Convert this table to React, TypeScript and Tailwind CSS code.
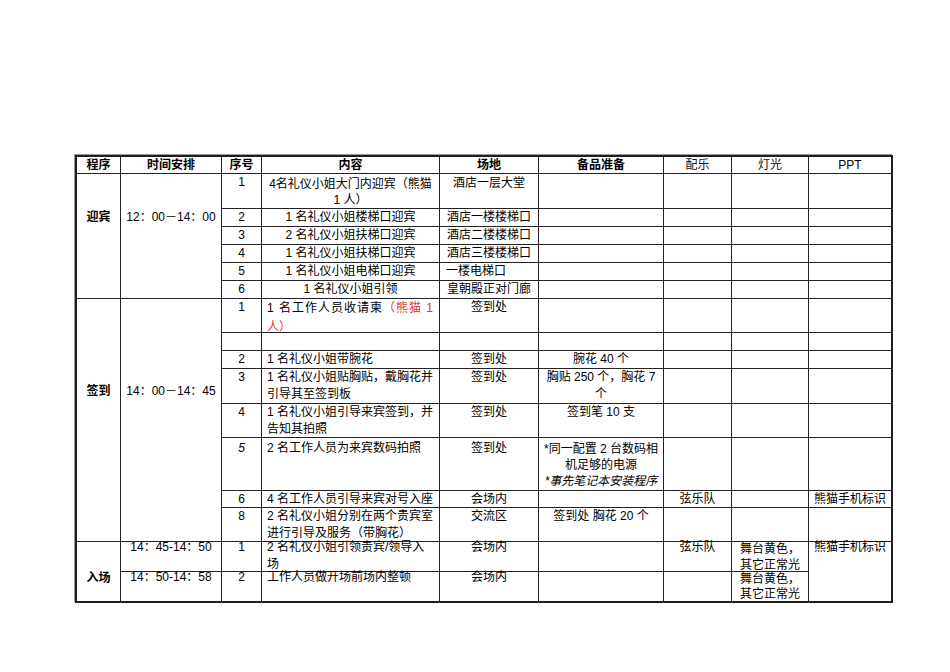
import React from "react";
import { twMerge } from "tailwind-merge";

const base =
  "border-r border-b border-[#222] text-[12px] leading-[17px] whitespace-nowrap text-black text-center";

const RS = [
  "row-start-1",
  "row-start-2",
  "row-start-3",
  "row-start-4",
  "row-start-5",
  "row-start-6",
  "row-start-7",
  "row-start-8",
  "row-start-9",
  "row-start-10",
  "row-start-11",
  "row-start-12",
  "row-start-13",
  "row-start-14",
  "row-start-15",
  "row-start-16",
  "row-start-17",
];
const CS = [
  "col-start-1",
  "col-start-2",
  "col-start-3",
  "col-start-4",
  "col-start-5",
  "col-start-6",
  "col-start-7",
  "col-start-8",
  "col-start-9",
];

type Cl = { t?: React.ReactNode; c?: string; span?: string; skip?: boolean };

function Cell({
  r,
  c,
  span,
  cls,
  children,
}: {
  r: number;
  c: number;
  span?: string;
  cls?: string;
  children?: React.ReactNode;
}) {
  return (
    <div
      className={twMerge(
        base,
        CS[c - 1],
        RS[r - 1],
        span ?? "",
        c === 9 ? "border-r-0" : "",
        r === 17 ? "border-b-0" : "",
        cls ?? ""
      )}
    >
      {children}
    </div>
  );
}

const RED = "text-[#e23535]";

const rows: { r: number; cells: Cl[] }[] = [
  {
    r: 2,
    cells: [
      { t: "1" },
      {
        t: (
          <>
            <div>4名礼仪小姐大门内迎宾（熊猫</div>
            <div>1 人）</div>
          </>
        ),
        c: "pt-[2px] leading-[16px]",
      },
      { t: "酒店一层大堂", c: "pt-[1px]" },
      {},
      {},
      {},
      {},
    ],
  },
  {
    r: 3,
    cells: [{ t: "2" }, { t: "1 名礼仪小姐楼梯口迎宾" }, { t: "酒店一楼楼梯口" }, {}, {}, {}, {}],
  },
  {
    r: 4,
    cells: [{ t: "3" }, { t: "2 名礼仪小姐扶梯口迎宾" }, { t: "酒店二楼楼梯口" }, {}, {}, {}, {}],
  },
  {
    r: 5,
    cells: [{ t: "4" }, { t: "1 名礼仪小姐扶梯口迎宾" }, { t: "酒店三楼楼梯口" }, {}, {}, {}, {}],
  },
  {
    r: 6,
    cells: [
      { t: "5" },
      { t: "1 名礼仪小姐电梯口迎宾" },
      { t: "一楼电梯口", c: "text-left pl-[6px]" },
      {},
      {},
      {},
      {},
    ],
  },
  {
    r: 7,
    cells: [{ t: "6" }, { t: "1 名礼仪小姐引领" }, { t: "皇朝殿正对门廊" }, {}, {}, {}, {}],
  },
  {
    r: 8,
    cells: [
      { t: "1" },
      {
        t: (
          <>
            <div className="tracking-[1px]">
              1 名工作人员收请柬<span className={RED}>（熊猫 1</span>
            </div>
            <div className={RED}>人）</div>
          </>
        ),
        c: "text-left pl-[5px] leading-[19px]",
      },
      { t: "签到处" },
      {},
      {},
      {},
      {},
    ],
  },
  { r: 9, cells: [{}, {}, {}, {}, {}, {}, {}] },
  {
    r: 10,
    cells: [
      { t: "2" },
      { t: "1 名礼仪小姐带腕花", c: "text-left pl-[5px]" },
      { t: "签到处" },
      { t: "腕花 40 个" },
      {},
      {},
      {},
    ],
  },
  {
    r: 11,
    cells: [
      { t: "3" },
      {
        t: (
          <>
            <div>1 名礼仪小姐贴胸贴，戴胸花并</div>
            <div>引导其至签到板</div>
          </>
        ),
        c: "text-left pl-[5px]",
      },
      { t: "签到处" },
      {
        t: (
          <>
            <div>胸贴 250 个，胸花 7</div>
            <div>个</div>
          </>
        ),
      },
      {},
      {},
      {},
    ],
  },
  {
    r: 12,
    cells: [
      { t: "4" },
      {
        t: (
          <>
            <div>1 名礼仪小姐引导来宾签到，并</div>
            <div>告知其拍照</div>
          </>
        ),
        c: "text-left pl-[5px]",
      },
      { t: "签到处" },
      { t: "签到笔 10 支" },
      {},
      {},
      {},
    ],
  },
  {
    r: 13,
    cells: [
      { t: <span className="italic">5</span>, c: "pt-[2px]" },
      { t: "2 名工作人员为来宾数码拍照", c: "text-left pl-[5px] pt-[2px]" },
      { t: "签到处", c: "pt-[2px]" },
      {
        t: (
          <>
            <div>*同一配置 2 台数码相</div>
            <div>机足够的电源</div>
            <div className="italic">*事先笔记本安装程序</div>
          </>
        ),
        c: "pt-[3px] leading-[16px]",
      },
      {},
      {},
      {},
    ],
  },
  {
    r: 14,
    cells: [
      { t: "6" },
      { t: "4 名工作人员引导来宾对号入座", c: "text-left pl-[5px]" },
      { t: "会场内" },
      {},
      { t: "弦乐队" },
      {},
      { t: "熊猫手机标识" },
    ],
  },
  {
    r: 15,
    cells: [
      { t: "8" },
      {
        t: (
          <>
            <div>2 名礼仪小姐分别在两个贵宾室</div>
            <div>进行引导及服务（带胸花）</div>
          </>
        ),
        c: "text-left pl-[5px]",
      },
      { t: "交流区" },
      { t: "签到处 胸花 20 个" },
      {},
      {},
      {},
    ],
  },
  {
    r: 16,
    cells: [
      { t: <div className="-mt-[3px]">1</div> },
      {
        t: (
          <div className="-mt-[3px]">
            <div>2 名礼仪小姐引领贵宾/领导入</div>
            <div>场</div>
          </div>
        ),
        c: "text-left pl-[5px]",
      },
      { t: <div className="-mt-[3px]">会场内</div> },
      {},
      { t: <div className="-mt-[3px]">弦乐队</div> },
      {
        t: (
          <div className="-mt-[1px]">
            <div>舞台黄色，</div>
            <div>其它正常光</div>
          </div>
        ),
        c: "leading-[16px]",
      },
      {
        t: <div className="-mt-[3px]">熊猫手机标识</div>,
        span: "row-span-2",
        c: "border-b-0",
      },
    ],
  },
  {
    r: 17,
    cells: [
      { t: <div className="-mt-[3px]">2</div> },
      {
        t: <div className="-mt-[3px]">工作人员做开场前场内整顿</div>,
        c: "text-left pl-[5px]",
      },
      { t: <div className="-mt-[3px]">会场内</div> },
      {},
      {},
      {
        t: (
          <>
            <div>舞台黄色，</div>
            <div>其它正常光</div>
          </>
        ),
        c: "leading-[15px]",
      },
      { skip: true },
    ],
  },
];

export default function App() {
  return (
    <div className="min-h-[672px] w-[950px] bg-white pt-[155px] pl-[75px] font-['Liberation_Sans','Noto_Sans_CJK_SC',sans-serif]">
      <div className="grid w-max grid-cols-[44px_101px_40px_178px_99px_125px_68px_77px_82px] grid-rows-[17px_35px_18px_18px_18px_18px_18px_34px_18px_18px_35px_34px_53px_17px_34px_30px_29px] border-2 border-[#1e1e1e] shadow-[-1px_-1px_0_#9a9a9a]">
        {/* header */}
        <Cell r={1} c={1} cls="font-bold">程序</Cell>
        <Cell r={1} c={2} cls="font-bold">时间安排</Cell>
        <Cell r={1} c={3} cls="font-bold">序号</Cell>
        <Cell r={1} c={4} cls="font-bold">内容</Cell>
        <Cell r={1} c={5} cls="font-bold">场地</Cell>
        <Cell r={1} c={6} cls="font-bold">备品准备</Cell>
        <Cell r={1} c={7} cls="text-[#111]">配乐</Cell>
        <Cell r={1} c={8} cls="text-[#111]">灯光</Cell>
        <Cell r={1} c={9}>PPT</Cell>

        {/* 程序 */}
        <Cell r={2} c={1} span="row-span-6" cls="font-bold pt-[35px]">
          迎宾
        </Cell>
        <Cell r={8} c={1} span="row-span-8" cls="font-bold pt-[84px]">
          签到
        </Cell>
        <Cell r={16} c={1} span="row-span-2" cls="font-bold pt-[28px] border-b-0">
          入场
        </Cell>

        {/* 时间安排 */}
        <Cell r={2} c={2} span="row-span-6" cls="pt-[35px]">
          12：00－14：00
        </Cell>
        <Cell r={8} c={2} span="row-span-8" cls="pt-[84px]">
          14：00－14：45
        </Cell>
        <Cell r={16} c={2}>
          <div className="-mt-[3px]">14：45-14：50</div>
        </Cell>
        <Cell r={17} c={2}>
          <div className="-mt-[3px]">14：50-14：58</div>
        </Cell>

        {rows.map((row) =>
          row.cells.map((cell, i) =>
            cell.skip ? null : (
              <Cell key={`${row.r}-${i}`} r={row.r} c={i + 3} span={cell.span} cls={cell.c}>
                {cell.t}
              </Cell>
            )
          )
        )}
      </div>
    </div>
  );
}
